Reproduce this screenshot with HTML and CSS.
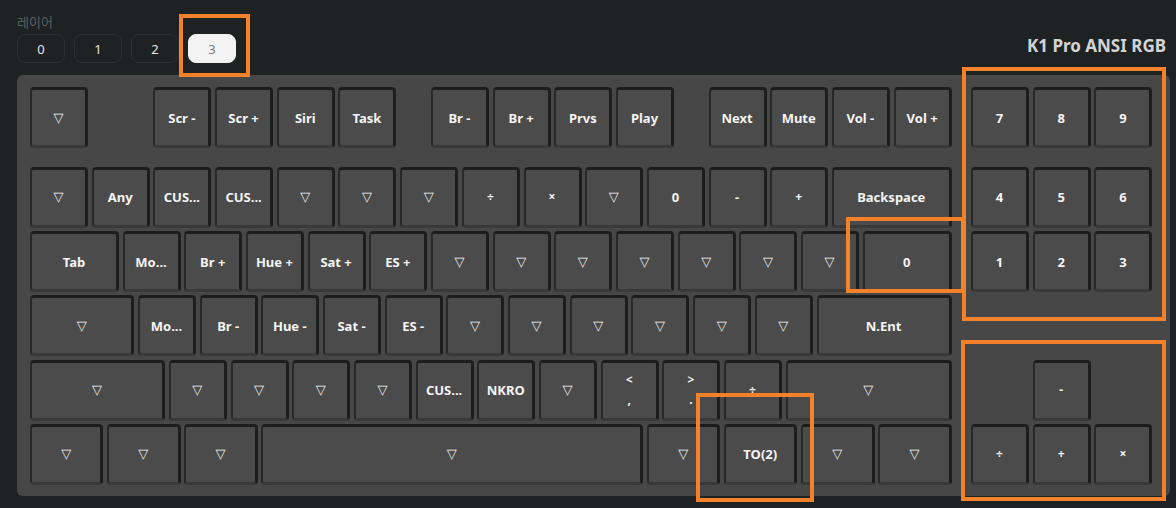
FILE: index.html
```html
<!DOCTYPE html>
<html lang="ko">
<head>
<meta charset="utf-8">
<title>K1 Pro ANSI RGB</title>
<link rel="stylesheet" href="styles.css">
</head>
<body>
<div class="page">
  <div class="header">
    <div class="layer-group">
      <div class="layer-label">레이어</div>
      <div class="layers">
        <div class="layer-btn">0</div>
        <div class="layer-btn">1</div>
        <div class="layer-btn">2</div>
        <div class="layer-btn active">3</div>
      </div>
    </div>
    <div class="title">K1 Pro ANSI RGB</div>
  </div>

  <div class="board">
    <div class="row first">
      <div class="main">
        <div class="key tri">▽</div>
        <div class="sp1"></div>
        <div class="key">Scr -</div>
        <div class="key">Scr +</div>
        <div class="key">Siri</div>
        <div class="key">Task</div>
        <div class="sp05"></div>
        <div class="key">Br -</div>
        <div class="key">Br +</div>
        <div class="key">Prvs</div>
        <div class="key">Play</div>
        <div class="sp05"></div>
        <div class="key">Next</div>
        <div class="key">Mute</div>
        <div class="key">Vol -</div>
        <div class="key">Vol +</div>
      </div>
      <div class="pad">
        <div class="key">7</div>
        <div class="key">8</div>
        <div class="key">9</div>
      </div>
    </div>

    <div class="row">
      <div class="main">
        <div class="key tri">▽</div>
        <div class="key">Any</div>
        <div class="key">CUS...</div>
        <div class="key">CUS...</div>
        <div class="key tri">▽</div>
        <div class="key tri">▽</div>
        <div class="key tri">▽</div>
        <div class="key sym">÷</div>
        <div class="key sym">×</div>
        <div class="key tri">▽</div>
        <div class="key">0</div>
        <div class="key">-</div>
        <div class="key sym">+</div>
        <div class="key w2">Backspace</div>
      </div>
      <div class="pad">
        <div class="key">4</div>
        <div class="key">5</div>
        <div class="key">6</div>
      </div>
    </div>

    <div class="row">
      <div class="main">
        <div class="key w15">Tab</div>
        <div class="key">Mo...</div>
        <div class="key">Br +</div>
        <div class="key">Hue +</div>
        <div class="key">Sat +</div>
        <div class="key">ES +</div>
        <div class="key tri">▽</div>
        <div class="key tri">▽</div>
        <div class="key tri">▽</div>
        <div class="key tri">▽</div>
        <div class="key tri">▽</div>
        <div class="key tri">▽</div>
        <div class="key tri">▽</div>
        <div class="key w15">0</div>
      </div>
      <div class="pad">
        <div class="key">1</div>
        <div class="key">2</div>
        <div class="key">3</div>
      </div>
    </div>

    <div class="row">
      <div class="main">
        <div class="key tri w175">▽</div>
        <div class="key">Mo...</div>
        <div class="key">Br -</div>
        <div class="key">Hue -</div>
        <div class="key">Sat -</div>
        <div class="key">ES -</div>
        <div class="key tri">▽</div>
        <div class="key tri">▽</div>
        <div class="key tri">▽</div>
        <div class="key tri">▽</div>
        <div class="key tri">▽</div>
        <div class="key tri">▽</div>
        <div class="key w225">N.Ent</div>
      </div>
      <div class="pad"></div>
    </div>

    <div class="row">
      <div class="main">
        <div class="key tri w225">▽</div>
        <div class="key tri">▽</div>
        <div class="key tri">▽</div>
        <div class="key tri">▽</div>
        <div class="key tri">▽</div>
        <div class="key">CUS...</div>
        <div class="key">NKRO</div>
        <div class="key tri">▽</div>
        <div class="key two"><span>&lt;</span><span>,</span></div>
        <div class="key two"><span>&gt;</span><span>.</span></div>
        <div class="key sym">÷</div>
        <div class="key tri w275">▽</div>
      </div>
      <div class="pad">
        <div class="sp1"></div>
        <div class="key sym">-</div>
        <div class="sp1"></div>
      </div>
    </div>

    <div class="row">
      <div class="main">
        <div class="key tri w125">▽</div>
        <div class="key tri w125">▽</div>
        <div class="key tri w125">▽</div>
        <div class="key tri w625">▽</div>
        <div class="key tri w125">▽</div>
        <div class="key w125">TO(2)</div>
        <div class="key tri w125">▽</div>
        <div class="key tri w125">▽</div>
      </div>
      <div class="pad">
        <div class="key sym">÷</div>
        <div class="key sym">+</div>
        <div class="key sym">×</div>
      </div>
    </div>
  </div>

  <div class="hl hl-layer"></div>
  <div class="hl hl-zero"></div>
  <div class="hl hl-pad"></div>
  <div class="hl hl-ops"></div>
  <div class="hl hl-to"></div>
</div>
</body>
</html>
```

FILE: styles.css
```css
:root {
  --u: 61.7px;
  --g: 3.7px;
  --orange: #f5822a;
}

* {
  box-sizing: border-box;
}

html, body {
  margin: 0;
  background: #1f2223;
}

body {
  font-family: "Noto Sans", "Open Sans", "Noto Sans CJK KR", sans-serif;
}

.page {
  position: relative;
  width: 1176px;
  height: 508px;
  padding: 14px 0 0 17px;
  overflow: hidden;
}

.header {
  display: flex;
  justify-content: space-between;
  align-items: flex-end;
  width: 1149px;
  height: 49px;
  margin-bottom: 12px;
}

.layer-label {
  font-family: "Noto Sans CJK KR", sans-serif;
  font-size: 13px;
  line-height: 16px;
  color: #5c5f60;
  margin-bottom: 4px;
}

.layers {
  display: flex;
  gap: 9px;
}

.layer-btn {
  width: 48px;
  height: 29px;
  border: 1px solid #2d3031;
  border-radius: 8px;
  display: flex;
  align-items: center;
  justify-content: center;
  color: #e4e4e4;
  font-size: 13px;
}

.layer-btn.active {
  background: #f3f3f3;
  border-color: #f3f3f3;
  color: #7a7a7a;
}

.title {
  font-weight: 700;
  font-size: 17px;
  line-height: 20px;
  color: #d4d4d4;
  margin-bottom: 7px;
}

.board {
  width: 1153px;
  background: #474747;
  border-radius: 6px;
  padding: 12px 0 11px 13px;
  display: flex;
  flex-direction: column;
  gap: 3.2px;
}

.row {
  display: flex;
  gap: 19.2px;
  height: 61px;
}

.row.first {
  margin-bottom: 15.8px;
}

.main,
.pad {
  display: flex;
  gap: var(--g);
}

.main {
  width: calc(var(--u) * 15 - var(--g));
}

.pad {
  width: calc(var(--u) * 3 - var(--g));
}

.sp1 {
  flex: none;
  width: calc(var(--u) - var(--g));
}

.sp05 {
  flex: none;
  width: calc(var(--u) * 0.5 - var(--g));
}

.key {
  flex: none;
  width: calc(var(--u) - var(--g));
  height: 61px;
  background: #4b4b4b;
  border-style: solid;
  border-color: #1c1e1e #1c1e1e #393939 #272929;
  border-width: 3px 3px 3px 2px;
  border-radius: 4px;
  display: flex;
  align-items: center;
  justify-content: center;
  color: #f4f4f4;
  font-weight: 700;
  font-size: 13px;
  line-height: 18px;
  text-align: center;
  white-space: nowrap;
}

.key.tri {
  font-family: "DejaVu Sans", sans-serif;
  font-weight: 400;
  font-size: 13px;
}

.key.sym {
  font-size: 12px;
}

.key.two {
  flex-direction: column;
  gap: 2px;
  font-size: 12px;
}

.w125 { width: calc(var(--u) * 1.25 - var(--g)); }
.w15  { width: calc(var(--u) * 1.5 - var(--g)); }
.w175 { width: calc(var(--u) * 1.75 - var(--g)); }
.w2   { width: calc(var(--u) * 2 - var(--g)); }
.w225 { width: calc(var(--u) * 2.25 - var(--g)); }
.w275 { width: calc(var(--u) * 2.75 - var(--g)); }
.w625 { width: calc(var(--u) * 6.25 - var(--g)); }

.hl {
  position: absolute;
  border: 4px solid var(--orange);
  pointer-events: none;
}

.hl-layer { left: 179px; top: 14px; width: 71px; height: 63px; }
.hl-zero  { left: 846px; top: 217px; width: 119px; height: 76px; }
.hl-pad   { left: 962px; top: 67px; width: 204px; height: 254px; }
.hl-ops   { left: 961px; top: 340px; width: 205px; height: 161px; }
.hl-to    { left: 696px; top: 393px; width: 118px; height: 109px; }
```
